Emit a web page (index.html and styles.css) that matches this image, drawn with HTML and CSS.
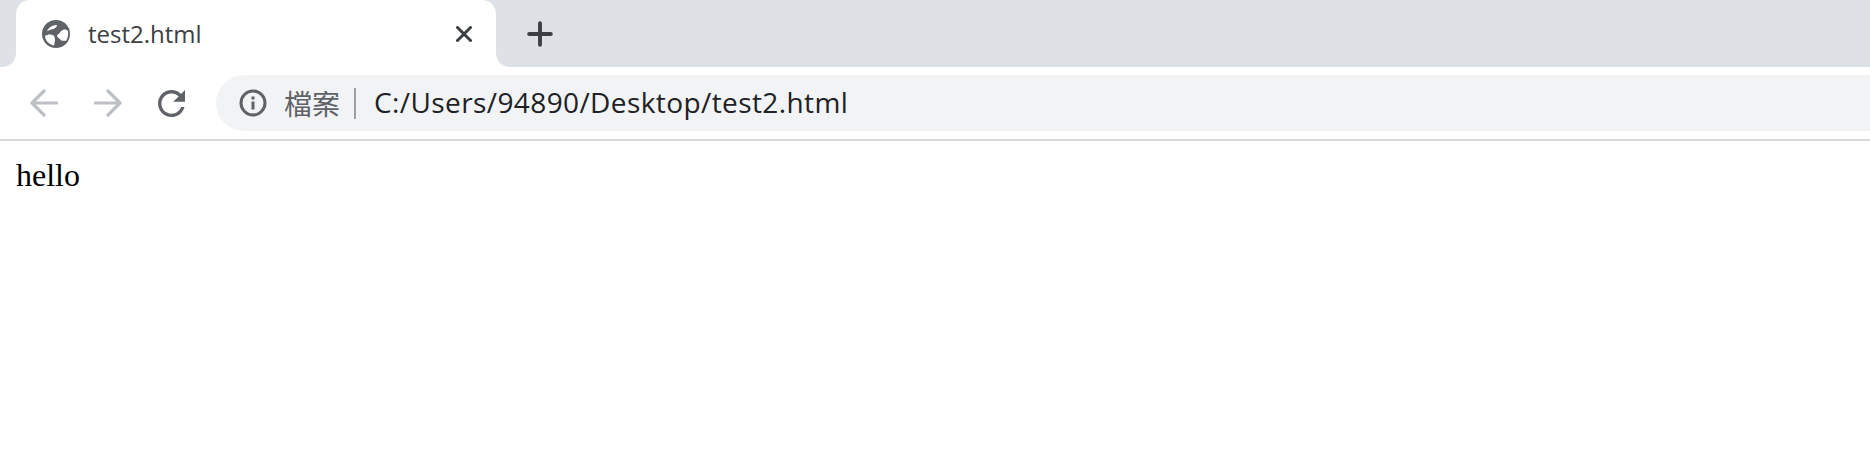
FILE: index.html
```html
<!DOCTYPE html>
<html lang="zh-Hant">
<head>
    <meta charset="UTF-8">
    <meta name="viewport" content="width=device-width, initial-scale=1.0">
    <title>test2.html</title>
    <link rel="stylesheet" href="styles.css">
</head>
<body>

    <!-- Tabs -->
    <div class="tabstrip">
        <div class="tab">
            <svg class="tab-favicon" viewBox="0 0 28 28">
                <circle cx="14" cy="14" r="14" class="globe-disc"/>
                <path class="globe-land" d="M3 16C6 14 10 14 12 16C13.500 18 13 22 12 25.500C7 24.500 3.500 21 3 16Z"/>
                <path class="globe-land" d="M5 11C7 7 11 5 15 5C15 7 13 8.500 11 9C8.500 9.500 7 10.500 5 11Z"/>
                <path class="globe-land" d="M26 11C26.500 14 26 18 24 21C22 20 20 22 18.500 19.500C16.500 18 15 17 15 15C18 14 18 11 21 10C23 9 25 10 26 11Z"/>
            </svg>
            <span class="tab-title">test2.html</span>
            <svg class="tab-close" viewBox="0 0 16 16">
                <path d="M1.500 1.500l13 13M14.500 1.500l-13 13"/>
            </svg>
        </div>
        <svg class="new-tab" viewBox="0 0 24 24">
            <path d="M12 2v20M2 12h20"/>
        </svg>
    </div>

    <!-- Toolbar -->
    <div class="toolbar">
        <svg class="nav-icon nav-off" viewBox="0 0 28 28">
            <path d="M27 14H3M14 2L2 14l12 12"/>
        </svg>
        <svg class="nav-icon nav-off" viewBox="0 0 28 28">
            <path d="M1 14h24M14 2l12 12-12 12"/>
        </svg>
        <svg class="reload-icon" viewBox="4 4 16 16">
            <path d="M17.650 6.350C16.200 4.900 14.210 4 12 4c-4.420 0-7.990 3.580-7.990 8s3.570 8 7.990 8c3.730 0 6.840-2.550 7.730-6h-2.080c-.820 2.330-3.040 4-5.650 4-3.310 0-6-2.690-6-6s2.690-6 6-6c1.660 0 3.140.690 4.220 1.780L13 11h7V4l-2.350 2.350z"/>
        </svg>
        <div class="omnibox">
            <svg class="info-icon" viewBox="0 0 28 28">
                <circle cx="14" cy="14" r="12" class="info-ring"/>
                <rect x="12.500" y="12.500" width="3" height="8" class="info-dot"/>
                <rect x="12.500" y="7.500" width="3" height="3" class="info-dot"/>
            </svg>
            <span class="origin-chip">檔案</span>
            <span class="origin-sep"></span>
            <span class="url">C:/Users/94890/Desktop/test2.html</span>
        </div>
    </div>

    <!-- Page -->
    <div class="page">hello</div>

</body>
</html>
```

FILE: styles.css
```css
/* Base */
body {
    margin: 0;
    background-color: white;
    font-family: "Open Sans", "Noto Sans CJK TC", sans-serif;
    overflow: hidden;
}

/* Tabs */
.tabstrip {
    display: flex;
    align-items: center;
    height: 67px;
    padding-left: 16px;
    background-color: #dee1e6;
}

.tab {
    position: relative;
    display: flex;
    align-items: center;
    width: 480px;
    height: 67px;
    padding: 0 20px 0 26px;
    box-sizing: border-box;
    background-color: white;
    border-radius: 14px 14px 0 0;
}

/* flared bottom corners of the active tab */
.tab::before,
.tab::after {
    content: "";
    position: absolute;
    bottom: 0;
    width: 14px;
    height: 14px;
}
.tab::before {
    left: -14px;
    background: radial-gradient(circle at 0 0, transparent 13.5px, white 14.5px);
}
.tab::after {
    right: -14px;
    background: radial-gradient(circle at 100% 0, transparent 13.5px, white 14.5px);
}

.tab-favicon {
    width: 28px;
    height: 28px;
    flex: none;
}
.globe-disc { fill: #5f6368; }
.globe-land { fill: white; }

.tab-title {
    flex: 1;
    margin-left: 18px;
    font-size: 24px;
    color: #3c4043;
}

.tab-close {
    width: 16px;
    height: 16px;
    fill: none;
    stroke: #3c4043;
    stroke-width: 3;
    stroke-linecap: round;
    margin-right: 4px;
}

.new-tab {
    width: 26px;
    height: 26px;
    margin-left: 31px;
    fill: none;
    stroke: #3c4043;
    stroke-width: 3.600;
    stroke-linecap: round;
}

/* Toolbar */
.toolbar {
    display: flex;
    align-items: center;
    height: 72px;
    padding-left: 30px;
    background-color: white;
    border-bottom: 2px solid #d8d8dc;
}

.nav-icon {
    width: 28px;
    height: 28px;
    flex: none;
    margin-right: 36px;
    fill: none;
    stroke-width: 3.200;
}
.nav-off { stroke: #bdc1c6; stroke-linecap: round; stroke-linejoin: round; }

.reload-icon {
    width: 27px;
    height: 27px;
    flex: none;
    margin-right: 31px;
    fill: #5f6368;
}

.omnibox {
    display: flex;
    align-items: center;
    flex: 1;
    height: 56px;
    padding-left: 23px;
    background-color: #f1f3f4;
    border-radius: 28px 0 0 28px;
}

.info-icon {
    width: 28px;
    height: 28px;
    flex: none;
}
.info-ring { fill: none; stroke: #5f6368; stroke-width: 3; }
.info-dot { fill: #5f6368; }

.origin-chip {
    margin-left: 17px;
    font-size: 28px;
    color: #5f6368;
}

.origin-sep {
    width: 2px;
    height: 31px;
    margin-left: 14px;
    background-color: #9aa0a6;
}

.url {
    margin-left: 18px;
    padding-bottom: 2px;
    font-size: 28px;
    letter-spacing: 0.4px;
    color: #202124;
}

/* Page content */
.page {
    padding: 16px 16px;
    font-family: "Liberation Serif", serif;
    font-size: 32px;
    color: black;
}
```
